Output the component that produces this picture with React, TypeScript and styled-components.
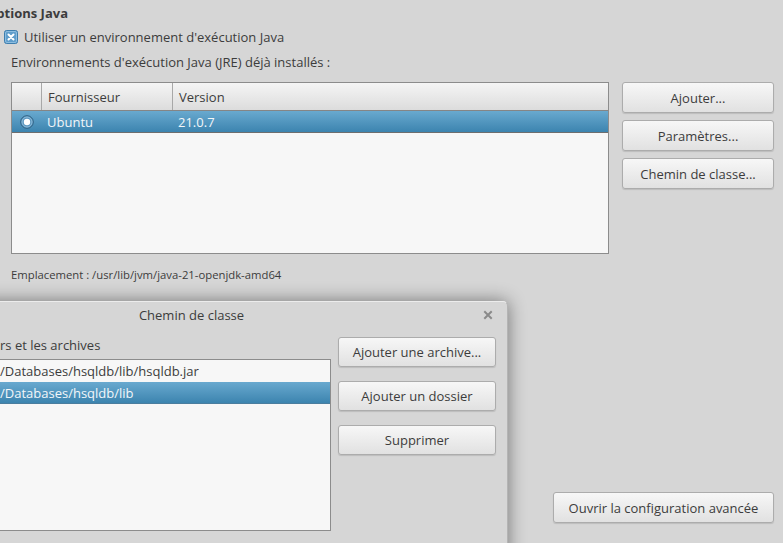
import React from "react";
import styled, { createGlobalStyle } from "styled-components";

const Global = createGlobalStyle`
  html, body { margin: 0; padding: 0; }
  body {
    width: 783px; height: 543px; overflow: hidden;
    background: #d6d6d6;
    font-family: "Open Sans", "Noto Sans", sans-serif;
    font-size: 13px;
    color: #3c3c3c;
  }
  #root { width: 783px; height: 543px; position: relative; overflow: hidden; }
`;

const Main = styled.div`
  display: flex;
  flex-direction: column;
  height: 543px;
  box-sizing: border-box;
  padding: 0 9px 20px 11px;
`;

const Title = styled.div`
  font-weight: 700;
  margin: 4px 0 0 -25px;
  height: 18px;
  line-height: 18px;
  white-space: nowrap;
`;

const CheckRow = styled.label`
  display: flex;
  align-items: center;
  gap: 6px;
  margin: 6px 0 0 -7px;
  height: 18px;
`;

const Label = styled.div`
  margin-top: 7px;
  height: 18px;
  line-height: 18px;
`;

const JreRow = styled.div`
  display: flex;
  gap: 13px;
  margin-top: 11px;
`;

const Table = styled.div`
  width: 598px;
  height: 172px;
  box-sizing: border-box;
  border: 1px solid #8c8c8c;
  background: #f7f7f7;
  display: flex;
  flex-direction: column;
`;

const HeaderRow = styled.div`
  display: grid;
  grid-template-columns: 29px 131px 1fr;
  height: 27px;
  background: linear-gradient(#f5f5f5, #dcdcdc);
  border-bottom: 1px solid #858585;
`;

const HeaderCell = styled.div<{ first?: boolean }>`
  display: flex;
  align-items: center;
  padding-left: 6px;
  border-left: ${(p) => (p.first ? "none" : "1px solid #a8a8a8")};
`;

const DataRow = styled.div<{ selected?: boolean }>`
  display: grid;
  grid-template-columns: 29px 131px 1fr;
  height: 21px;
  background: ${(p) => (p.selected ? "linear-gradient(#69a9cf, #3c84af)" : "transparent")};
  color: ${(p) => (p.selected ? "#f2f6f9" : "#3c3c3c")};
  border-bottom: ${(p) => (p.selected ? "1px solid #6e6e6e" : "none")};
`;

const Cell = styled.div`
  display: flex;
  align-items: center;
  padding-left: 6px;
`;

const RadioCell = styled.div`
  display: flex;
  align-items: center;
  padding-left: 8px;
`;

const ButtonCol = styled.div<{ gap: number }>`
  display: flex;
  flex-direction: column;
  gap: ${(p) => p.gap}px;
`;

const Button = styled.button<{ w: number; h: number }>`
  width: ${(p) => p.w}px;
  height: ${(p) => p.h}px;
  box-sizing: border-box;
  border: 1px solid #acacac;
  border-radius: 3px;
  background: linear-gradient(#f7f7f7, #e1e1e1);
  box-shadow: 0 1px 1px rgba(0, 0, 0, 0.12);
  font-family: inherit;
  font-size: 13px;
  color: #3c3c3c;
  padding: 0;
`;

const Location = styled.div`
  margin-top: 13px;
  font-size: 11.3px;
  height: 16px;
  line-height: 16px;
`;

const BottomRow = styled.div`
  margin-top: auto;
  display: flex;
  justify-content: flex-end;
`;

const Dialog = styled.div`
  position: absolute;
  left: -124px;
  top: 301px;
  width: 631px;
  height: 260px;
  background: #d6d6d6;
  border-top: 1px solid #ececec;
  border-right: 1px solid #b4b4b4;
  border-radius: 0 5px 0 0;
  box-shadow: 0 0 18px rgba(0, 0, 0, 0.46);
  display: flex;
  flex-direction: column;
`;

const TitleBar = styled.div`
  height: 25px;
  display: flex;
  align-items: center;
  justify-content: center;
  position: relative;
`;

const Close = styled.div`
  position: absolute;
  right: 14px;
  top: 8px;
  width: 10px;
  height: 10px;
  display: flex;
`;

const DialogBody = styled.div`
  display: flex;
  gap: 7px;
  padding: 10px 0 0 12px;
`;

const LeftCol = styled.div`
  display: flex;
  flex-direction: column;
  width: 443px;
`;

const ListLabel = styled.div`
  height: 16px;
  line-height: 16px;
  margin-bottom: 6px;
  padding-left: 112px;
  white-space: nowrap;
`;

const List = styled.div`
  height: 172px;
  box-sizing: border-box;
  border: 1px solid #8c8c8c;
  background: #f7f7f7;
`;

const ListItem = styled.div<{ selected?: boolean }>`
  height: 21px;
  display: flex;
  align-items: center;
  padding-left: 111px;
  white-space: nowrap;
  background: ${(p) => (p.selected ? "linear-gradient(#69a9cf, #3c84af)" : "transparent")};
  color: ${(p) => (p.selected ? "#f2f6f9" : "#3c3c3c")};
  border-bottom: ${(p) => (p.selected ? "1px solid #4a7d9e" : "none")};
  margin-top: ${(p) => (p.selected ? "1px" : "0")};
`;

const CheckIcon = () => (
  <svg width="14" height="14" viewBox="0 0 14 14">
    <rect x="0.5" y="0.5" width="13" height="13" rx="2" fill="#5f9dcb" stroke="#3e7eae" />
    <rect x="1.5" y="1.5" width="11" height="11" rx="1.5" fill="none" stroke="#8dbde0" />
    <path d="M4.5 4.5 L9.5 9.5 M9.5 4.5 L4.5 9.5" stroke="#ffffff" strokeWidth="2" strokeLinecap="round" />
  </svg>
);

const RadioIcon = () => (
  <svg width="14" height="14" viewBox="0 0 14 14">
    <circle cx="7" cy="7" r="6.3" fill="#5a96bf" stroke="#2f5f80" strokeWidth="1" />
    <circle cx="7" cy="7" r="5" fill="none" stroke="#9cc6e2" strokeWidth="0.8" />
    <circle cx="7" cy="7" r="3.2" fill="#ffffff" />
  </svg>
);

const CloseIcon = () => (
  <svg width="10" height="10" viewBox="0 0 10 10">
    <path d="M2 2 L8 8 M8 2 L2 8" stroke="#8a8a8a" strokeWidth="2" strokeLinecap="square" />
  </svg>
);

export default function App() {
  return (
    <>
      <Global />
      <Main>
        <Title>Options Java</Title>
        <CheckRow>
          <CheckIcon />
          <span>Utiliser un environnement d'exécution Java</span>
        </CheckRow>
        <Label>Environnements d'exécution Java (JRE) déjà installés :</Label>
        <JreRow>
          <Table>
            <HeaderRow>
              <HeaderCell first />
              <HeaderCell>Fournisseur</HeaderCell>
              <HeaderCell>Version</HeaderCell>
            </HeaderRow>
            <DataRow selected>
              <RadioCell>
                <RadioIcon />
              </RadioCell>
              <Cell>Ubuntu</Cell>
              <Cell>21.0.7</Cell>
            </DataRow>
          </Table>
          <ButtonCol gap={7}>
            <Button w={152} h={31}>Ajouter...</Button>
            <Button w={152} h={31}>Paramètres...</Button>
            <Button w={152} h={31}>Chemin de classe...</Button>
          </ButtonCol>
        </JreRow>
        <Location>Emplacement : /usr/lib/jvm/java-21-openjdk-amd64</Location>
        <BottomRow>
          <Button w={221} h={31}>Ouvrir la configuration avancée</Button>
        </BottomRow>
      </Main>
      <Dialog>
        <TitleBar>
          Chemin de classe
          <Close>
            <CloseIcon />
          </Close>
        </TitleBar>
        <DialogBody>
          <LeftCol>
            <ListLabel>rs et les archives</ListLabel>
            <List>
              <ListItem>/Databases/hsqldb/lib/hsqldb.jar</ListItem>
              <ListItem selected>/Databases/hsqldb/lib</ListItem>
            </List>
          </LeftCol>
          <ButtonCol gap={14}>
            <Button w={158} h={30}>Ajouter une archive...</Button>
            <Button w={158} h={30}>Ajouter un dossier</Button>
            <Button w={158} h={30}>Supprimer</Button>
          </ButtonCol>
        </DialogBody>
      </Dialog>
    </>
  );
}
